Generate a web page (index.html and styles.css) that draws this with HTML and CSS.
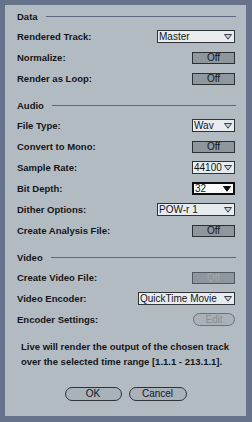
FILE: index.html
```html
<!DOCTYPE html>
<html lang="en">
<head>
  <meta charset="utf-8" />
  <title>Export Audio/Video</title>
  <link rel="stylesheet" href="styles.css">
</head>
<body>
  <div class="export-panel">
    <div class="section-head first"><span>Data</span><i></i></div>
    <div class="row"><label>Rendered Track:</label><div class="chooser wide">Master<svg viewBox="0 0 8 6"><path d="M0.5 0.5 H7.5 L4 5.2 Z"/></svg></div></div>
    <div class="row"><label>Normalize:</label><div class="toggle">Off</div></div>
    <div class="row"><label>Render as Loop:</label><div class="toggle">Off</div></div>

    <div class="section-head"><span>Audio</span><i></i></div>
    <div class="row"><label>File Type:</label><div class="chooser">Wav<svg viewBox="0 0 8 6"><path d="M0.5 0.5 H7.5 L4 5.2 Z"/></svg></div></div>
    <div class="row"><label>Convert to Mono:</label><div class="toggle">Off</div></div>
    <div class="row"><label>Sample Rate:</label><div class="chooser">44100<svg viewBox="0 0 8 6"><path d="M0.5 0.5 H7.5 L4 5.2 Z"/></svg></div></div>
    <div class="row"><label>Bit Depth:</label><div class="chooser focused">32<svg viewBox="0 0 8 6"><path d="M0.5 0.5 H7.5 L4 5.2 Z"/></svg></div></div>
    <div class="row"><label>Dither Options:</label><div class="chooser wide">POW-r 1<svg viewBox="0 0 8 6"><path d="M0.5 0.5 H7.5 L4 5.2 Z"/></svg></div></div>
    <div class="row"><label>Create Analysis File:</label><div class="toggle">Off</div></div>

    <div class="section-head"><span>Video</span><i></i></div>
    <div class="row"><label>Create Video File:</label><div class="toggle disabled">Off</div></div>
    <div class="row"><label>Video Encoder:</label><div class="chooser wider">QuickTime Movie<svg viewBox="0 0 8 6"><path d="M0.5 0.5 H7.5 L4 5.2 Z"/></svg></div></div>
    <div class="row"><label>Encoder Settings:</label><div class="pill small disabled">Edit</div></div>

    <p class="note">Live will render the output of the chosen track<br>over the selected time range [1.1.1 - 213.1.1].</p>

    <div class="actions">
      <div class="pill">OK</div>
      <div class="pill">Cancel</div>
    </div>
  </div>
</body>
</html>
```

FILE: styles.css
```css
body {
  background: #66738b;
  margin: 0;
  padding: 0;
  font-family: 'Liberation Sans', Arial, sans-serif;
  color: #141618;
}
.export-panel {
  margin: 5px;
  width: 241px;
  height: 411px;
  box-sizing: border-box;
  background: #b3bbc2;
  padding: 2px 11px 0 12px;
}
.section-head {
  display: flex;
  align-items: center;
  height: 19px;
  margin-top: 7px;
  font-size: 9.5px;
  font-weight: bold;
}
.section-head.first { margin-top: 0; }
.section-head i {
  flex: 1;
  height: 1px;
  background: #5d6884;
  margin-left: 8px;
  margin-right: -1px;
}
.row {
  display: flex;
  align-items: center;
  justify-content: space-between;
  height: 21px;
}
.row label {
  font-size: 9.5px;
  font-weight: bold;
}
.toggle {
  width: 43px;
  height: 12px;
  box-sizing: border-box;
  border: 1px solid #2c3035;
  background: #8e969e;
  font-size: 10px;
  line-height: 10px;
  text-align: center;
}
.toggle.disabled {
  color: #a3a9af;
  border-color: #50575e;
}
.chooser {
  display: flex;
  align-items: center;
  justify-content: space-between;
  width: 43px;
  height: 13px;
  box-sizing: border-box;
  border: 1px solid #2f3338;
  background: #e8ecef;
  padding: 0 2px 0 1px;
  font-size: 10px;
  line-height: 11px;
}
.chooser.wide { width: 78px; }
.chooser.wider { width: 97px; }
.chooser svg {
  width: 8px;
  height: 6px;
  flex: none;
}
.chooser svg path {
  fill: #c9d2e2;
  stroke: #3a3f48;
  stroke-width: 1;
}
.chooser.focused {
  border: 2px solid #0c0d0e;
  background: #fbfbfb;
  padding: 0 2px 0 1px;
}
.chooser.focused svg path {
  fill: #0c0d0e;
  stroke: #0c0d0e;
}
.pill {
  width: 57px;
  height: 14px;
  box-sizing: border-box;
  border: 1px solid #2f3338;
  border-radius: 7px;
  background: #a9b1b9;
  font-size: 10px;
  line-height: 12px;
  text-align: center;
}
.pill.small {
  width: 42px;
  height: 13px;
  line-height: 11px;
}
.pill.disabled {
  color: #878d93;
  border-color: #6a7279;
  background: #aab2b9;
}
.note {
  margin: 9px 0 0 4px;
  font-size: 9.5px;
  font-weight: bold;
  line-height: 15px;
}
.actions {
  display: flex;
  justify-content: center;
  gap: 7px;
  margin-top: 18px;
  margin-right: 1px;
}
.actions .pill + .pill { width: 58px; }
```
